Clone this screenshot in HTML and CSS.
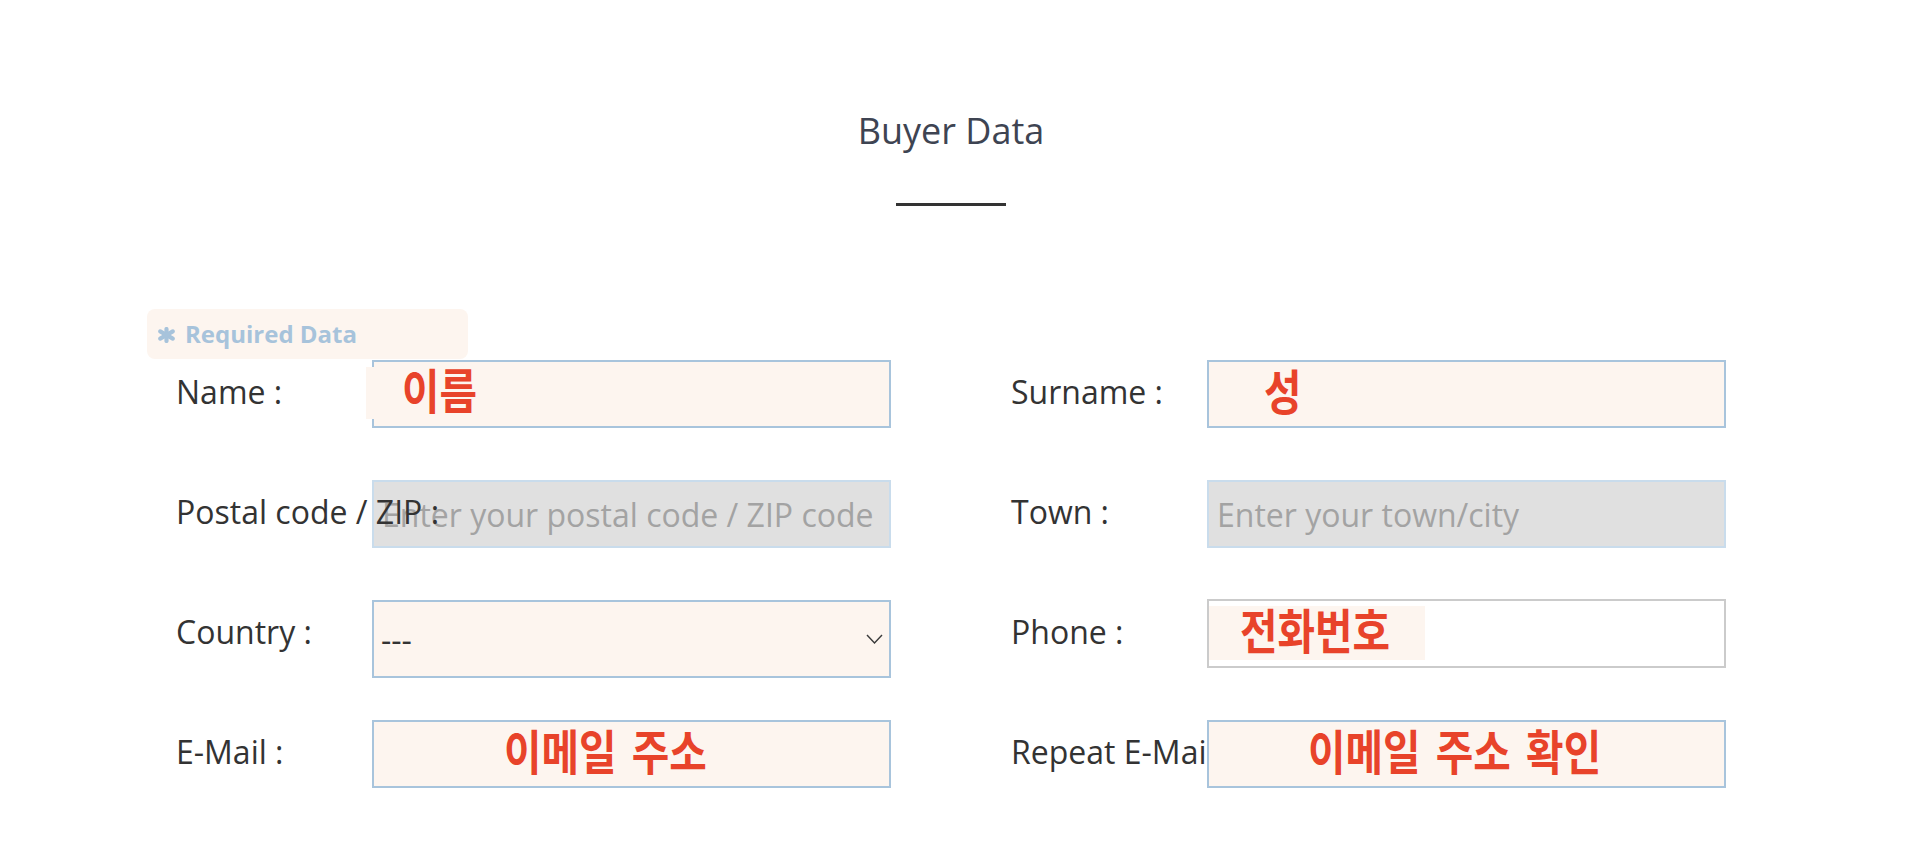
FILE: index.html
```html
<!DOCTYPE html>
<html lang="en">
<head>
<meta charset="utf-8">
<title>Buyer Data</title>
<link rel="stylesheet" href="styles.css">
</head>
<body>
<section class="buyer">
  <h2 class="title">Buyer Data</h2>
  <div class="divider"></div>
  <div class="form-wrap">
    <div class="required">
      <svg class="ast" viewBox="0 0 19 16" width="19" height="16" aria-hidden="true">
        <g stroke="#a7c3db" stroke-width="4.2" stroke-linecap="round">
          <line x1="9.5" y1="2" x2="9.5" y2="14"/>
          <line x1="3.2" y1="4.4" x2="15.8" y2="11.6"/>
          <line x1="3.2" y1="11.6" x2="15.8" y2="4.4"/>
        </g>
      </svg>
      <span>Required Data</span>
    </div>
    <form class="form">
      <div class="cell">
        <label class="lbl">Name :</label>
        <div class="field">
          <input class="inp" type="text">
          <div class="tr tr-name"><span>이름</span></div>
        </div>
      </div>
      <div class="cell">
        <label class="lbl">Surname :</label>
        <div class="field">
          <input class="inp" type="text">
          <div class="tr tr-full tr-surname"><span>성</span></div>
        </div>
      </div>
      <div class="cell">
        <label class="lbl">Postal code / ZIP :</label>
        <div class="field">
          <input class="inp inp-dis" type="text" placeholder="Enter your postal code / ZIP code" disabled>
        </div>
      </div>
      <div class="cell">
        <label class="lbl">Town :</label>
        <div class="field">
          <input class="inp inp-dis" type="text" placeholder="Enter your town/city" disabled>
        </div>
      </div>
      <div class="cell">
        <label class="lbl">Country :</label>
        <div class="field">
          <select class="sel"><option>---</option></select>
          <svg class="chev" viewBox="0 0 17 10" width="17" height="10" aria-hidden="true">
            <path d="M1 1 L8.5 9 L16 1" fill="none" stroke="#3a3a3a" stroke-width="1.4"/>
          </svg>
        </div>
      </div>
      <div class="cell">
        <label class="lbl">Phone :</label>
        <div class="field">
          <input class="inp inp-plain" type="text">
          <div class="tr tr-phone"><span>전화번호</span></div>
        </div>
      </div>
      <div class="cell">
        <label class="lbl">E-Mail :</label>
        <div class="field">
          <input class="inp" type="text">
          <div class="tr tr-full tr-email"><span>이메일 주소</span></div>
        </div>
      </div>
      <div class="cell">
        <label class="lbl">Repeat E-Mail :</label>
        <div class="field">
          <input class="inp" type="text">
          <div class="tr tr-full tr-repeat"><span>이메일 주소 확인</span></div>
        </div>
      </div>
    </form>
  </div>
</section>
</body>
</html>
```

FILE: styles.css
```css
html, body {
  margin: 0;
  padding: 0;
  background: #ffffff;
}

body {
  font-family: "Open Sans", "Noto Sans", sans-serif;
  color: #333333;
}

.buyer {
  width: 1902px;
  padding-top: 107px;
  display: flex;
  flex-direction: column;
  align-items: center;
}

.title {
  margin: 0;
  font-size: 36px;
  line-height: 48px;
  font-weight: 400;
  color: #3e4452;
}

.divider {
  margin-top: 48px;
  width: 110px;
  height: 3px;
  background: #333333;
}

.form-wrap {
  width: 1550px;
  margin-top: 103px;
}

.required {
  margin-left: -29px;
  width: 321px;
  height: 50px;
  box-sizing: border-box;
  border-radius: 8px;
  background: #fdf5ef;
  display: flex;
  align-items: center;
  padding-left: 10px;
  gap: 9px;
  font-size: 24px;
  font-weight: 700;
  line-height: 50px;
  color: #a7c3db;
}

.ast {
  display: block;
  margin-top: 2px;
}

.form {
  margin: 1px 0 0 0;
  display: grid;
  grid-template-columns: 715px 715px;
  column-gap: 120px;
  grid-auto-rows: 120px;
}

.cell {
  display: grid;
  grid-template-columns: 196px 519px;
  align-items: start;
}

.lbl {
  position: relative;
  z-index: 1;
  padding-top: 8px;
  font-size: 32px;
  line-height: 48px;
  white-space: nowrap;
  color: #333333;
}

.field {
  position: relative;
}

.inp {
  display: block;
  box-sizing: border-box;
  width: 519px;
  height: 68px;
  margin: 0;
  padding: 0 8px;
  border: 2px solid #a8c4dc;
  border-radius: 0;
  background: #fdf5ef;
  font-family: "Open Sans", sans-serif;
  font-size: 32px;
  color: #333333;
  outline: none;
}

.inp::placeholder {
  color: #a3a3a3;
  opacity: 1;
}

.inp-dis {
  background: #e0e0e0;
  border-color: #c9dcec;
}

.inp-plain {
  height: 69px;
  margin-top: -1px;
  background: #ffffff;
  border-color: #cbcbcb;
}

.sel {
  display: block;
  box-sizing: border-box;
  width: 519px;
  height: 78px;
  margin: 0;
  padding: 0 30px 0 7px;
  border: 2px solid #a8c4dc;
  border-radius: 0;
  background: #fdf5ef;
  font-family: "Open Sans", sans-serif;
  font-size: 32px;
  color: #333333;
  appearance: none;
  -webkit-appearance: none;
  outline: none;
}

.chev {
  position: absolute;
  right: 8px;
  top: 34px;
  pointer-events: none;
}

.tr {
  position: absolute;
  z-index: 2;
  display: flex;
  align-items: center;
  box-sizing: border-box;
  padding-bottom: 10px;
  background: #fdf5ef;
  color: #e8432a;
  font-family: "Noto Sans CJK KR", "Noto Sans CJK SC", sans-serif;
  font-size: 48px;
  font-weight: 700;
  line-height: 1;
  word-spacing: 7px;
  white-space: nowrap;
  pointer-events: none;
}

.tr span {
  display: inline-block;
  transform: scaleX(0.85);
  transform-origin: left center;
}

.tr-full {
  inset: 0;
  border: 2px solid #a8c4dc;
}

.tr-name {
  left: -6px;
  top: 7px;
  height: 52px;
  right: 2px;
  padding-left: 36px;
}

.tr-surname {
  padding-left: 55px;
}

.tr-phone {
  left: 2px;
  top: 6px;
  width: 216px;
  height: 54px;
  padding-left: 31px;
}

.tr-email {
  padding-left: 130px;
}

.tr-repeat {
  padding-left: 99px;
}
```
